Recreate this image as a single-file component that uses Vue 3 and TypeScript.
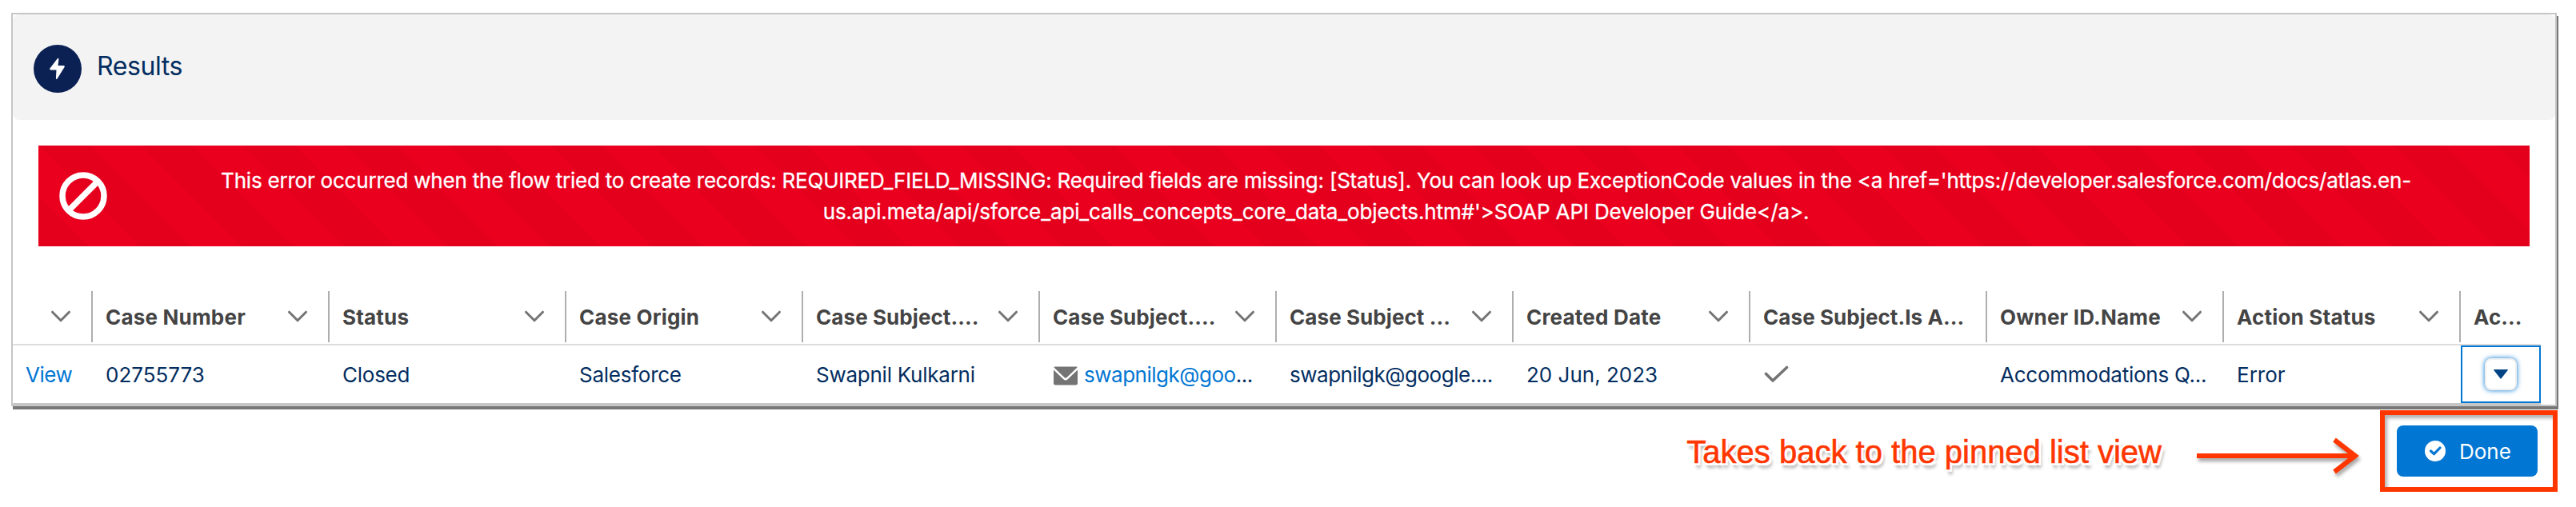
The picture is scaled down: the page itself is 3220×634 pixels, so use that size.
<script setup lang="ts">
interface Column {
  label: string
  menu: boolean
  value?: string
  kind: 'link' | 'text' | 'number' | 'handle' | 'email' | 'check' | 'action'
}

const columns: Column[] = [
  { label: '', menu: true, value: 'View', kind: 'link' },
  { label: 'Case Number', menu: true, value: '02755773', kind: 'number' },
  { label: 'Status', menu: true, value: 'Closed', kind: 'text' },
  { label: 'Case Origin', menu: true, value: 'Salesforce', kind: 'text' },
  { label: 'Case Subject....', menu: true, value: 'Swapnil Kulkarni', kind: 'text' },
  { label: 'Case Subject....', menu: true, value: 'swapnilgk@goo', kind: 'email' },
  { label: 'Case Subject ...', menu: true, value: 'swapnilgk@google....', kind: 'handle' },
  { label: 'Created Date', menu: true, value: '20 Jun, 2023', kind: 'number' },
  { label: 'Case Subject.Is A...', menu: false, kind: 'check' },
  { label: 'Owner ID.Name', menu: true, value: 'Accommodations Q...', kind: 'text' },
  { label: 'Action Status', menu: true, value: 'Error', kind: 'number' },
  { label: 'Ac...', menu: false, kind: 'action' },
]
</script>

<template>
  <main class="page">
    <section class="panel">
      <header class="panel-head">
        <span class="badge">
          <svg width="60" height="60" viewBox="0 0 60 60"><path d="M29.6 17.4 20.4 29.6q-.9 1.9.9 1.9h7.2l-.6 10.4q.2 1.9 1.6.5l9.200-14.700q.7-1.600-1-1.700h-7.200l.9-7.800q-.3-2.300-1.800-.8Z" fill="#fff" /></svg>
        </span>
        <h1 class="title">Results</h1>
      </header>

      <div class="alert">
        <svg class="ban" width="60" height="60" viewBox="0 0 60 60"><circle cx="30" cy="30" r="26" /><path d="M46 14 14 46" /></svg>
        <p class="alert-text">
          <span class="line-first">This error occurred when the flow tried to create records: REQUIRED_FIELD_MISSING: Required fields are missing: [Status]. You can look up ExceptionCode values in the &lt;a href='https://developer.salesforce.com/docs/atlas.en-</span><br /><span class="line-last">us.api.meta/api/sforce_api_calls_concepts_core_data_objects.htm#'&gt;SOAP API Developer Guide&lt;/a&gt;.</span>
        </p>
      </div>

      <div class="table">
        <div class="row head">
          <div v-for="(c, i) in columns" :key="i" class="th" :class="{ truncated: c.label.endsWith('...') }">
            <span>{{ c.label }}</span>
            <svg v-if="c.menu" class="chev" width="26" height="16" viewBox="0 0 26 16"><path d="M2.5 2.2 13 12.8 23.5 2.2" /></svg>
          </div>
        </div>
        <div class="row body">
          <div v-for="(c, i) in columns" :key="i" class="td" :class="c.kind">
            <a v-if="c.kind === 'link'" class="anchor">{{ c.value }}</a>
            <template v-else-if="c.kind === 'email'">
              <svg class="mail" width="30" height="24" viewBox="0 0 30 24"><path d="M1.5.5h27q1 0 1 1L16.8 13.700q-1.800 1.700-3.600 0L.5 1.500q0-1 1-1Z" /><path d="M0 4.400 12.300 16.200q2.700 2.500 5.400 0L30 4.400V21q0 2.500-2.500 2.500h-25Q0 23.500 0 21Z" /></svg>
              <a class="anchor">{{ c.value }}</a><span>...</span>
            </template>
            <svg v-else-if="c.kind === 'check'" class="tick" width="32" height="22" viewBox="0 0 32 22"><path d="M3.500 10.500 12 19 29.500 2.500" /></svg>
            <button v-else-if="c.kind === 'action'" class="menu" aria-label="Row actions">
              <svg width="18" height="12" viewBox="0 0 18 12"><path d="M.5 0h17q.7.400.2 1L9.600 11.300q-.6.700-1.200 0L.3 1Q-.2.400.5 0Z" fill="#014486" /></svg>
            </button>
            <span v-else>{{ c.value }}</span>
          </div>
        </div>
      </div>
    </section>

    <footer class="foot">
      <span class="note">Takes back to the pinned list view</span>
      <svg class="arrow" width="212" height="80" viewBox="0 0 212 80"><path d="M0 40h198M172 20l26 20-26 20" /></svg>
      <div class="frame">
        <button class="done">
          <svg width="26" height="26" viewBox="0 0 26 26"><circle cx="13" cy="13" r="13" fill="#fff" /><path d="M7.500 13 11.500 16.700 19 9" fill="none" stroke="#0176d3" stroke-width="3.200" stroke-linecap="round" stroke-linejoin="round" /></svg>
          <span>Done</span>
        </button>
      </div>
    </footer>
  </main>
</template>

<style>
body { background: #fff; }
</style>

<style scoped>
.page {
  box-sizing: border-box;
  width: 3220px;
  height: 634px;
  padding: 16px 24px 0 14px;
  overflow: hidden;
  font-family: Inter, "Liberation Sans", sans-serif;
  font-size: 26px;
  color: #032d60;
}
.panel {
  box-sizing: border-box;
  height: 492px;
  border: 2px solid #c6c6c6;
  box-shadow: 2px 4px 0 #777;
  background: #fff;
}
.panel-head {
  box-sizing: border-box;
  display: flex;
  align-items: flex-start;
  gap: 19px;
  height: 132px;
  padding: 38px 26px 0;
  border-radius: 8px;
  background: #f3f3f3;
}
.badge { width: 60px; height: 60px; border-radius: 50%; background: #0b2154; }
.badge svg { display: block; }
.title { margin: 7px 0 0; font-size: 32px; line-height: 40px; font-weight: 400; letter-spacing: -0.4px; }
.alert {
  box-sizing: border-box;
  display: flex;
  align-items: flex-start;
  height: 126px;
  margin: 32px 32px 0;
  padding: 24px;
  background-color: #ea001e;
  background-image: linear-gradient(45deg, rgba(0, 0, 0, 0.025) 25%, transparent 25%, transparent 50%, rgba(0, 0, 0, 0.025) 50%, rgba(0, 0, 0, 0.025) 75%, transparent 75%, transparent);
  background-size: 128px 128px;
  color: #fff;
}
.ban { flex: none; margin: 9px 0 0 2px; fill: none; stroke: #fff; stroke-width: 7.5; }
.alert-text { flex: 1; margin: 0 0 0 18px; line-height: 39px; text-align: center; white-space: nowrap; -webkit-text-stroke: 0.3px #fff; }
.line-first { letter-spacing: -0.215px; }
.line-last { letter-spacing: -0.12px; }
.table { margin-top: 44px; width: 3160px; }
.row { display: grid; grid-template-columns: 100px repeat(10, 296px) 100px; box-sizing: border-box; }
.head { height: 80px; padding-top: 12px; border-bottom: 2px solid #dddddd; }
.th {
  box-sizing: border-box;
  display: flex;
  align-items: center;
  justify-content: space-between;
  height: 64px;
  padding: 0 25px 0 16px;
  border-right: 2px solid #aeaeae;
  font-weight: 700;
  letter-spacing: 0.2px;
  color: #444;
  white-space: nowrap;
}
.th.truncated { letter-spacing: 0.08px; }
.th:last-child { border-right: 0; }
.chev { flex: none; fill: none; stroke: #747474; stroke-width: 3; stroke-linecap: round; stroke-linejoin: round; }
.body { height: 74px; border-bottom: 2px solid #c6c6c6; }
.td { display: flex; align-items: center; padding: 0 16px; letter-spacing: -0.25px; white-space: nowrap; }
.td.number { letter-spacing: 0; }
.td.link, .td.email, .td.handle { letter-spacing: -0.48px; }
.anchor { color: #0176d3; }
.mail { margin: 3px 8px 0 1px; fill: #747474; }
.tick { fill: none; stroke: #747474; stroke-width: 3.6; stroke-linecap: round; stroke-linejoin: round; }
.td.action { justify-content: center; padding: 0; border: 2px solid #0176d3; }
.menu {
  display: flex;
  align-items: center;
  justify-content: center;
  box-sizing: border-box;
  width: 40px;
  height: 40px;
  padding: 0;
  border: 2px solid #f0f0f0;
  border-radius: 8px;
  background: #fff;
  box-shadow: 0 0 6px #0176d3;
}
.foot { display: flex; justify-content: flex-end; height: 102px; margin: 5px -1px 0 0; }
.note {
  height: 46px;
  margin-top: 29px;
  font: 40px/46px "Liberation Sans", Arial, sans-serif;
  color: #ff3600;
  white-space: nowrap;
  -webkit-text-stroke: 0.6px #ff3600;
  text-shadow: 2px 0 0 #fff, -2px 0 0 #fff, 0 2px 0 #fff, 0 -2px 0 #fff, 3px 3px 0 #fff, -2px 3px 0 #fff, 3px -2px 0 #fff, 3px 6px 4px rgba(0, 0, 0, 0.4);
}
.arrow { margin: 17px 17px 0 44px; fill: none; stroke: #ff3600; stroke-width: 6; filter: drop-shadow(2px 4px 2px rgba(0, 0, 0, 0.35)); }
.frame {
  box-sizing: border-box;
  flex: none;
  width: 222px;
  height: 102px;
  padding: 13px 15px;
  border: 6px solid #ff3600;
  box-shadow: inset 3px 4px 4px rgba(0, 0, 0, 0.3);
}
.done {
  display: flex;
  align-items: center;
  gap: 17px;
  width: 176px;
  height: 64px;
  padding: 0 0 0 35px;
  border: 0;
  border-radius: 8px;
  background: #0176d3;
  color: #fff;
  font: 26px Inter, "Liberation Sans", sans-serif;
}
</style>
